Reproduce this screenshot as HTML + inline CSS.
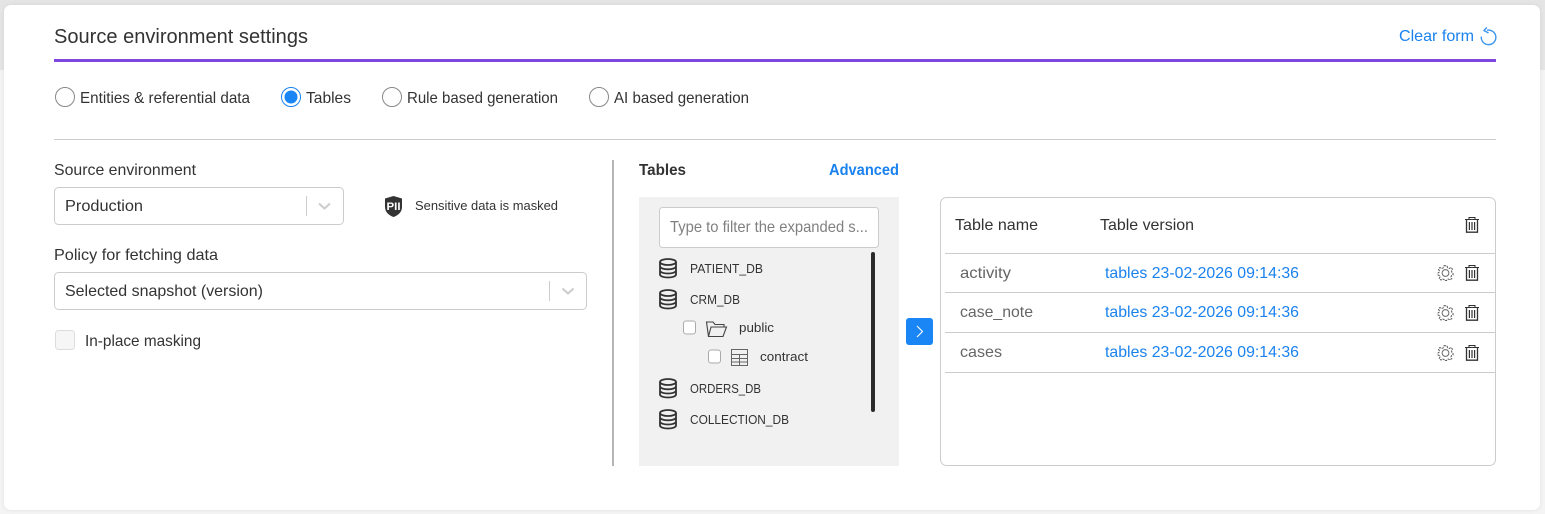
<!DOCTYPE html>
<html><head><meta charset="utf-8"><style>
html,body{margin:0;padding:0;background:#f4f4f4;width:1545px;height:514px;overflow:hidden}
svg{display:block}
text{font-family:"Liberation Sans",sans-serif;font-size:16px;fill:#333}
.b{fill:#1a82ee}
.s{font-size:13px}
</style></head><body>
<svg width="1545" height="514" viewBox="0 0 1545 514" xmlns="http://www.w3.org/2000/svg">
<defs>
<filter id="sh" x="-2%" y="-5%" width="104%" height="110%"><feDropShadow dx="0" dy="0" stdDeviation="2" flood-color="#000" flood-opacity=".08"/></filter>
<g id="db" fill="none" stroke="#333" stroke-width="1.800">
<ellipse cx="9" cy="3.500" rx="8" ry="3"/>
<path d="M1 3.500v12.500c0 1.800 3.600 3 8 3s8-1.200 8-3V3.500M1 7.800c0 1.800 3.600 3 8 3s8-1.200 8-3M1 12c0 1.800 3.600 3 8 3s8-1.200 8-3"/>
</g>
<g id="trash" fill="none" stroke="#333" stroke-width="1.100">
<path d="M-7-5.500H7M-3-5.500V-7.500H3V-5.500" />
<path d="M-5.500-5.500V7.200H5.500V-5.500" stroke-width="1.300"/>
<path d="M-2.600-3V5M0-3V5M2.600-3V5" stroke-width="1.200"/>
</g>
<g id="gear" fill="none" stroke="#555" stroke-width="1">
<circle r="3.400" stroke="#666"/>
<path d="M-1.500-7.300H1.500L2.100-5.200 3.700-4.500 5.600-5.500 7-3.700 6-2 6.500-.6 7.500 0V2L6 2.500 5.500 3.900 6.300 5.500 4.500 7 2.800 6 1.500 6.500 1 7.500H-1L-1.500 6.500-2.800 6-4.500 7-6.300 5.500-5.500 3.900-6 2.500-7.500 2V0L-6.500-.6-6-2-7-3.700-5.600-5.500-3.700-4.500-2.100-5.200Z" stroke-dasharray="2.200 1"/>
</g>
</defs>
<rect x="0" y="0" width="1545" height="70" fill="#e5e5e5"/>
<rect x="4" y="5" width="1536" height="505" rx="7" fill="#fff" filter="url(#sh)"/>

<text x="54" y="43" style="font-size:20px" textLength="254" lengthAdjust="spacingAndGlyphs">Source environment settings</text>
<text x="1399" y="41" class="b" textLength="75" lengthAdjust="spacingAndGlyphs">Clear form</text>
<path d="M1487 30.200A7.300 7.300 0 1 1 1481.300 36.500" fill="none" stroke="#3d95f0" stroke-width="1.400"/>
<path d="M1486.800 27.300L1484 30.500L1488.500 33" fill="none" stroke="#3d95f0" stroke-width="1.400"/>
<rect x="54" y="59" width="1442" height="3" fill="#7f47dd"/>

<circle cx="65" cy="97" r="9.500" fill="#fff" stroke="#888" stroke-width="1"/>
<text x="80" y="103" textLength="170" lengthAdjust="spacingAndGlyphs">Entities &amp; referential data</text>
<circle cx="291" cy="97" r="9.500" fill="#fff" stroke="#1a82ee" stroke-width="1"/>
<circle cx="291" cy="97" r="6.500" fill="#1a86f5"/>
<text x="306" y="103" textLength="45" lengthAdjust="spacingAndGlyphs">Tables</text>
<circle cx="392" cy="97" r="9.500" fill="#fff" stroke="#888" stroke-width="1"/>
<text x="407" y="103" textLength="151" lengthAdjust="spacingAndGlyphs">Rule based generation</text>
<circle cx="599" cy="97" r="9.500" fill="#fff" stroke="#888" stroke-width="1"/>
<text x="614" y="103" textLength="135" lengthAdjust="spacingAndGlyphs">AI based generation</text>

<rect x="54" y="139" width="1442" height="1" fill="#ccc"/>

<text x="54" y="175" textLength="142" lengthAdjust="spacingAndGlyphs">Source environment</text>
<rect x="54.500" y="187.500" width="289" height="37" rx="4" fill="#fff" stroke="#ccc"/>
<text x="65" y="211" textLength="78" lengthAdjust="spacingAndGlyphs">Production</text>
<rect x="306" y="196" width="1" height="20" fill="#ccc"/>
<path d="M319 203.500L324.500 208.500L330 203.500" fill="none" stroke="#ccc" stroke-width="2"/>

<path d="M393.500 196L402 198.500V207C402 212 398 215.500 393.500 217C389 215.500 385 212 385 207V198.500Z" fill="#333"/>
<text x="386.500" y="210" style="font-size:11px;font-weight:bold;fill:#fff" textLength="14" lengthAdjust="spacingAndGlyphs">PII</text>
<text x="415" y="210" class="s" textLength="143" lengthAdjust="spacingAndGlyphs">Sensitive data is masked</text>

<text x="54" y="260" textLength="164" lengthAdjust="spacingAndGlyphs">Policy for fetching data</text>
<rect x="54.500" y="272.500" width="532" height="37" rx="4" fill="#fff" stroke="#ccc"/>
<text x="65" y="296" textLength="198" lengthAdjust="spacingAndGlyphs">Selected snapshot (version)</text>
<rect x="549" y="281" width="1" height="20" fill="#ccc"/>
<path d="M562.500 288.500L568 293.500L573.500 288.500" fill="none" stroke="#ccc" stroke-width="2"/>

<rect x="55.500" y="330.500" width="19" height="19" rx="3" fill="#f6f6f6" stroke="#ddd"/>
<text x="85" y="346" textLength="116" lengthAdjust="spacingAndGlyphs">In-place masking</text>

<rect x="612" y="160" width="2" height="306" fill="#b5b5b5"/>

<text x="639" y="175" style="font-weight:bold" textLength="47" lengthAdjust="spacingAndGlyphs">Tables</text>
<text x="829" y="175" class="b" style="font-weight:bold" textLength="70" lengthAdjust="spacingAndGlyphs">Advanced</text>

<rect x="639" y="197" width="260" height="269" fill="#f1f1f1"/>
<rect x="659.500" y="207.500" width="219" height="40" rx="3" fill="#fff" stroke="#ccc"/>
<text x="670" y="232" style="fill:#808080" textLength="198" lengthAdjust="spacingAndGlyphs">Type to filter the expanded s...</text>
<rect x="871" y="252" width="4" height="160" rx="2" fill="#2b2b2b"/>

<use href="#db" x="659" y="258.500"/>
<text x="690" y="273" class="s" textLength="73" lengthAdjust="spacingAndGlyphs">PATIENT_DB</text>
<use href="#db" x="659" y="289.500"/>
<text x="690" y="304" class="s" textLength="50" lengthAdjust="spacingAndGlyphs">CRM_DB</text>
<rect x="683.500" y="321" width="12" height="13" rx="2.500" fill="#fff" stroke="#aaa"/>
<path d="M708.500 336.500L706.500 322H713L715 324.500H724V327M708.500 336.500H723L726.500 327H711Z" fill="none" stroke="#444" stroke-width="1.100"/>
<text x="739" y="332" class="s" textLength="35" lengthAdjust="spacingAndGlyphs">public</text>
<rect x="708.500" y="350" width="12" height="13" rx="2.500" fill="#fff" stroke="#aaa"/>
<path d="M731.500 349.500H747.500V365.500H731.500ZM731.500 354.500H747.500M731.500 358.500H747.500M731.500 362H747.500M739.500 354.500V365.500" fill="none" stroke="#666" stroke-width="1"/>
<text x="760" y="361" class="s" textLength="48" lengthAdjust="spacingAndGlyphs">contract</text>
<use href="#db" x="659" y="378.500"/>
<text x="690" y="393" class="s" textLength="71" lengthAdjust="spacingAndGlyphs">ORDERS_DB</text>
<use href="#db" x="659" y="409.500"/>
<text x="690" y="424" class="s" textLength="99" lengthAdjust="spacingAndGlyphs">COLLECTION_DB</text>

<rect x="906" y="318" width="27" height="27" rx="3" fill="#1a86f5"/>
<path d="M917 326L922.500 331.500L917 337" fill="none" stroke="#fff" stroke-width="1.100"/>

<rect x="940.500" y="197.500" width="555" height="268" rx="6" fill="#fff" stroke="#ccc"/>
<text x="955" y="230" textLength="83" lengthAdjust="spacingAndGlyphs">Table name</text>
<text x="1100" y="230" textLength="94" lengthAdjust="spacingAndGlyphs">Table version</text>
<use href="#trash" x="1472" y="225"/>
<rect x="945" y="253" width="550" height="1" fill="#ccc"/>
<rect x="945" y="292" width="550" height="1" fill="#ccc"/>
<rect x="945" y="332" width="550" height="1" fill="#ccc"/>
<rect x="945" y="372" width="550" height="1" fill="#ccc"/>

<text x="960" y="278" style="fill:#666" textLength="51" lengthAdjust="spacingAndGlyphs">activity</text>
<text x="1105" y="278" class="b" textLength="194" lengthAdjust="spacingAndGlyphs">tables 23-02-2026 09:14:36</text>
<use href="#gear" x="1445.500" y="273"/>
<use href="#trash" x="1472" y="273"/>
<text x="960" y="317" style="fill:#666" textLength="73" lengthAdjust="spacingAndGlyphs">case_note</text>
<text x="1105" y="317" class="b" textLength="194" lengthAdjust="spacingAndGlyphs">tables 23-02-2026 09:14:36</text>
<use href="#gear" x="1445.500" y="313"/>
<use href="#trash" x="1472" y="313"/>
<text x="960" y="357" style="fill:#666" textLength="42" lengthAdjust="spacingAndGlyphs">cases</text>
<text x="1105" y="357" class="b" textLength="194" lengthAdjust="spacingAndGlyphs">tables 23-02-2026 09:14:36</text>
<use href="#gear" x="1445.500" y="353"/>
<use href="#trash" x="1472" y="353"/>
</svg>
</body></html>
